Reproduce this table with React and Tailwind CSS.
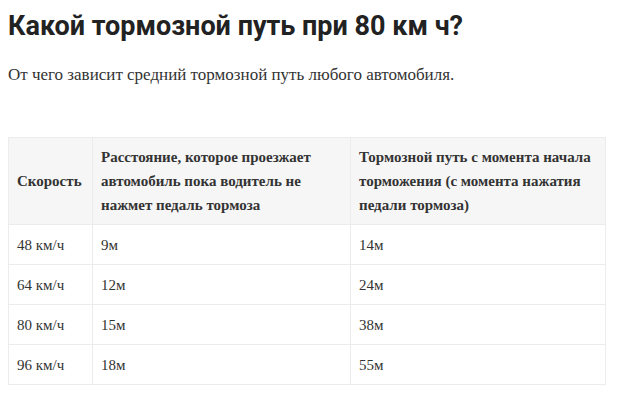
const rows = [
  ["48 км/ч", "9м", "14м"],
  ["64 км/ч", "12м", "24м"],
  ["80 км/ч", "15м", "38м"],
  ["96 км/ч", "18м", "55м"],
];

export default function App() {
  return (
    <div className="w-[640px] h-[419px] bg-white px-2 pt-[9px] overflow-hidden">
      <h1 className="[font-family:Roboto,sans-serif] font-bold text-[27px] leading-[34px] text-[#222]">
        Какой тормозной путь при 80 км ч?
      </h1>
      <p className="mt-[20px] [font-family:'Liberation_Serif',serif] text-[17px] leading-[24px] text-[#333]">
        От чего зависит средний тормозной путь любого автомобиля.
      </p>
      <table className="mt-[50px] w-[598px] border-collapse [font-family:'Liberation_Serif',serif] text-[15px] leading-[24px] text-[#333]">
        <thead>
          <tr className="bg-[#f6f6f6]">
            <th className="w-[84px] border border-[#ececec] px-2 py-[7px] text-left font-bold">Скорость</th>
            <th className="w-[258px] border border-[#ececec] px-2 py-[7px] text-left font-bold">
              Расстояние, которое проезжает автомобиль пока водитель не нажмет педаль тормоза
            </th>
            <th className="border border-[#ececec] px-2 py-[7px] text-left font-bold">
              Тормозной путь с момента начала торможения (с момента нажатия педали тормоза)
            </th>
          </tr>
        </thead>
        <tbody>
          {rows.map((r) => (
            <tr key={r[0]}>
              {r.map((c, i) => (
                <td key={i} className="border border-[#ececec] px-2 py-[7.5px]">{c}</td>
              ))}
            </tr>
          ))}
        </tbody>
      </table>
    </div>
  );
}
